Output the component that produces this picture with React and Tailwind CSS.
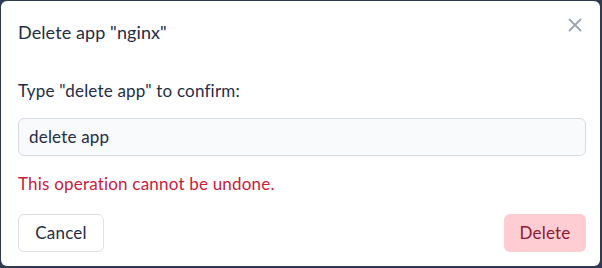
import React from "react";

export default function App() {
  return (
    <div
      className="w-[602px] h-[268px] bg-[#2e3b50] pl-px pt-px"
      style={{ fontFamily: "Lato, 'Noto Sans', sans-serif" }}
    >
      <div className="w-[599px] h-[265px] bg-white rounded-md flex flex-col px-4 tracking-[0.2px]">
        <div className="flex items-start justify-between pt-[19px]">
          <h2 className="text-[18px] leading-[24px] text-[#1f2d45] ml-px tracking-[0.1px]">Delete app "nginx"</h2>
          <button className="mt-[-2px] mr-[2px] text-[#9ca3af]">
            <svg width="14" height="14" viewBox="0 0 14 14" fill="none" stroke="currentColor" strokeWidth="1.8" strokeLinecap="round">
              <path d="M1.5 1.5L12.5 12.5M12.5 1.5L1.5 12.5" />
            </svg>
          </button>
        </div>
        <p className="mt-[36px] text-[17px] leading-[22px] text-[#1f2d45] ml-px">Type "delete app" to confirm:</p>
        <div className="mt-[16px] ml-px mr-[-2px] h-[38px] rounded-md border border-[#d6dbe3] bg-[#f8fafc] flex items-center px-[10px] text-[17px] text-[#1f2d45]">
          delete app
        </div>
        <p className="mt-[17px] ml-px text-[17px] leading-[22px] text-[#c8203b]">This operation cannot be undone.</p>
        <div className="mt-[19px] ml-px mr-[-2px] flex justify-between">
          <button className="h-[38px] w-[86px] rounded-md border border-[#dbe0e7] bg-white text-[17px] text-[#1f2d45]">Cancel</button>
          <button className="h-[38px] w-[82px] rounded-md bg-[#fecdd3] text-[17px] text-[#8c1a30]">Delete</button>
        </div>
      </div>
    </div>
  );
}
